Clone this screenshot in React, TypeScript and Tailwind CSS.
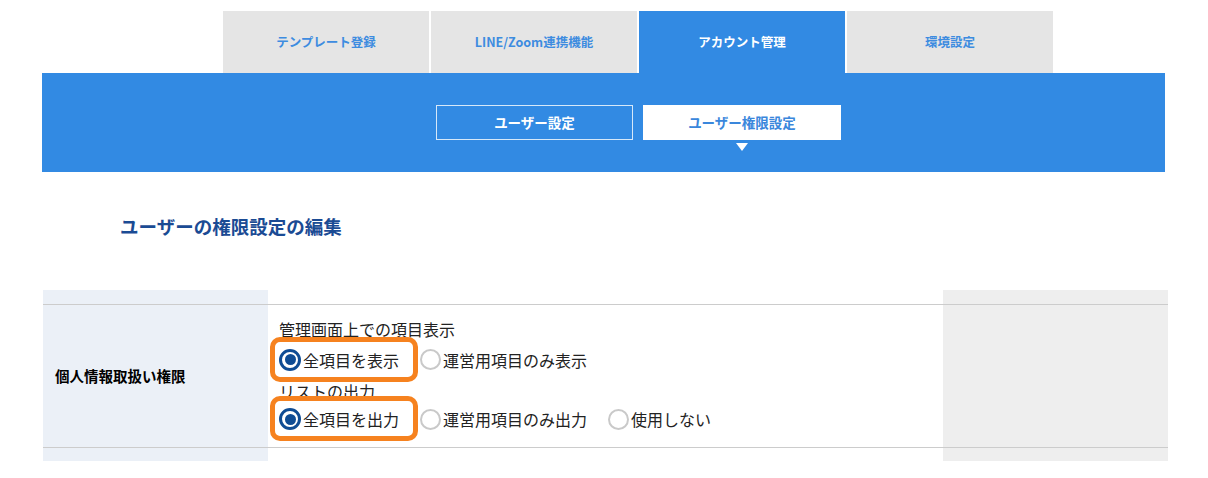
import React from 'react';

// アカウント管理 > ユーザー権限設定 画面
const tabs = ['テンプレート登録', 'LINE/Zoom連携機能', 'アカウント管理', '環境設定'];

function Radio({ checked, label, highlight }: { checked?: boolean; label: string; highlight?: boolean }) {
  return (
    <label className="relative flex items-center mr-[21px]">
      {/* 注目枠（オレンジ） */}
      {highlight && (
        <span className="absolute left-[-9px] right-[-19px] top-[-11px] bottom-[-10px] rounded-[10px] border-[5px] border-[#f6821f]" />
      )}
      {checked ? (
        <span className="w-[22px] h-[22px] rounded-full border-[3px] border-[#0f4c94] flex items-center justify-center shrink-0">
          <span className="w-[11px] h-[11px] rounded-full bg-[#0f4c94]" />
        </span>
      ) : (
        <span className="w-[21px] h-[21px] rounded-full border-2 border-[#c9c9c9] shrink-0" />
      )}
      <span className="ml-[2px] text-[16px] leading-[24px] text-[#222]">{label}</span>
    </label>
  );
}

export default function App() {
  return (
    <div className="w-[1208px] h-[478px] bg-white overflow-hidden font-['Noto_Sans_CJK_JP','Noto_Sans',sans-serif]">
      {/* 上部タブ */}
      <div className="flex gap-[2px] pt-[11px] pl-[223px]">
        {tabs.map((t, i) => (
          <div
            key={t}
            className={
              i === 2
                ? 'w-[206px] h-[62px] flex items-center justify-center bg-[#328ae3] text-white text-[12.5px] font-bold'
                : 'w-[206px] h-[62px] flex items-center justify-center bg-[#e5e5e5] text-[#3d8ce0] text-[12.5px] font-bold'
            }
          >
            {t}
          </div>
        ))}
      </div>

      {/* サブメニュー */}
      <div className="ml-[42px] w-[1123px] h-[99px] bg-[#328ae3] pt-[32px] pl-[394px] flex gap-[10px]">
        <div className="w-[197px] h-[35px] border border-white/80 flex items-center justify-center text-white text-[13.5px] font-bold">
          ユーザー設定
        </div>
        <div className="flex flex-col items-center">
          <div className="w-[198px] h-[35px] bg-white flex items-center justify-center text-[#3a87dc] text-[13.5px] font-bold">
            ユーザー権限設定
          </div>
          <div className="mt-[3px] w-0 h-0 border-l-[6px] border-r-[6px] border-t-[8px] border-l-transparent border-r-transparent border-t-white" />
        </div>
      </div>

      {/* 見出し */}
      <h1 className="mt-[41px] ml-[120px] text-[18.5px] leading-[27px] font-bold text-[#1b4b94]">
        ユーザーの権限設定の編集
      </h1>

      {/* 権限テーブル */}
      <div className="mt-[50px] ml-[43px] w-[1125px]">
        <div className="grid grid-cols-[225px_675px_225px] h-[14px]">
          <div className="bg-[#ebf0f7]" />
          <div />
          <div className="bg-[#eeeeee]" />
        </div>
        <div className="grid grid-cols-[225px_675px_225px] h-[144px] border-y border-[#cccccc]">
          <div className="bg-[#ebf0f7] flex items-center pl-[12px] text-[14.5px] font-bold text-black">
            個人情報取扱い権限
          </div>
          <div className="flex flex-col justify-center pl-[11px]">
            <div className="text-[16px] leading-[24px] text-[#222]">管理画面上での項目表示</div>
            <div className="flex items-center h-[38px]">
              <Radio checked highlight label="全項目を表示" />
              <Radio label="運営用項目のみ表示" />
            </div>
            <div className="text-[16px] leading-[24px] text-[#222]">リストの出力</div>
            <div className="flex items-center h-[33px]">
              <Radio checked highlight label="全項目を出力" />
              <Radio label="運営用項目のみ出力" />
              <Radio label="使用しない" />
            </div>
          </div>
          <div className="bg-[#eeeeee]" />
        </div>
        <div className="grid grid-cols-[225px_675px_225px] h-[13px]">
          <div className="bg-[#ebf0f7]" />
          <div />
          <div className="bg-[#eeeeee]" />
        </div>
      </div>
    </div>
  );
}
